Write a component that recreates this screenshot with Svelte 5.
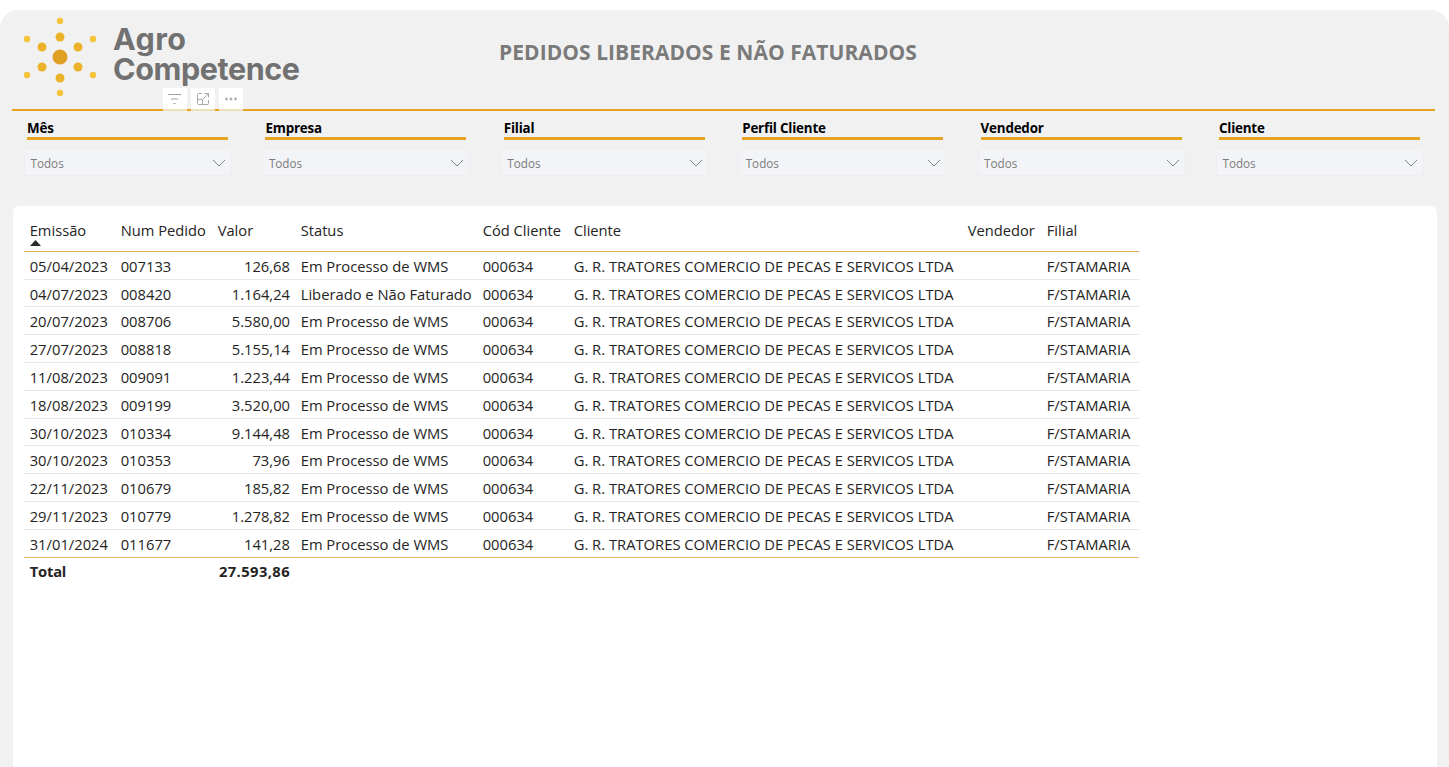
<script>
    const filters = ["Mês", "Empresa", "Filial", "Perfil Cliente", "Vendedor", "Cliente"];
    const columns = ["Emissão", "Num Pedido", "Valor", "Status", "Cód Cliente", "Cliente", "Vendedor", "Filial"];
    const processo = "Em Processo de WMS";
    const rows = [
        ["05/04/2023", "007133", "126,68", processo],
        ["04/07/2023", "008420", "1.164,24", "Liberado e Não Faturado"],
        ["20/07/2023", "008706", "5.580,00", processo],
        ["27/07/2023", "008818", "5.155,14", processo],
        ["11/08/2023", "009091", "1.223,44", processo],
        ["18/08/2023", "009199", "3.520,00", processo],
        ["30/10/2023", "010334", "9.144,48", processo],
        ["30/10/2023", "010353", "73,96", processo],
        ["22/11/2023", "010679", "185,82", processo],
        ["29/11/2023", "010779", "1.278,82", processo],
        ["31/01/2024", "011677", "141,28", processo],
    ];
    // logo dots: x, y, r, colour
    const dots = [
        [48, 47, 7.5, "#e0a024"],
        [48, 27, 4.5, "#ecb32a"], [48, 68, 4.5, "#ecb32a"],
        [30, 37, 4.5, "#ecb32a"], [66, 37, 4.5, "#ecb32a"],
        [30, 57, 4.5, "#ecb32a"], [66, 57, 4.5, "#ecb32a"],
        [48, 11, 3.2, "#f4c53c"], [48, 83, 3.2, "#f4c53c"],
        [15, 29, 3.2, "#f4c53c"], [81, 29, 3.2, "#f4c53c"],
        [15, 65, 3.2, "#f4c53c"], [81, 65, 3.2, "#f4c53c"],
    ];
</script>

<div class="panel">
    <header class="header">
        <svg class="sun" width="102" height="99" viewBox="0 0 102 99">
            {#each dots as d}
                <circle cx={d[0]} cy={d[1]} r={d[2]} fill={d[3]} />
            {/each}
        </svg>
        <div class="logo-text"><span class="agro">Agro</span><br />Competence</div>
        <h1 class="title">PEDIDOS LIBERADOS E NÃO FATURADOS</h1>

        <div class="toolbar">
            <span class="tool">
                <svg width="14" height="14" viewBox="0 0 14 14" fill="none" stroke="#a0a0a0">
                    <path d="M0 2.500h13M3 7h7M5.500 11.500h2" />
                </svg>
            </span>
            <span class="tool">
                <svg width="14" height="14" viewBox="0 0 14 14" fill="none" stroke="#a8a8a8">
                    <path d="M6 1.500H2.500a1 1 0 0 0-1 1v9a1 1 0 0 0 1 1h9a1 1 0 0 0 1-1V8M1.500 7.500h5v5M8.500 1.500h4v4M12.500 1.500 7 7" />
                </svg>
            </span>
            <span class="tool">
                <svg width="14" height="14" viewBox="0 0 14 14" fill="#b0b0b0">
                    <circle cx="2.500" cy="7" r="1.400" />
                    <circle cx="7" cy="7" r="1.400" />
                    <circle cx="11.500" cy="7" r="1.400" />
                </svg>
            </span>
        </div>
    </header>

    <div class="filters">
        {#each filters as f}
            <div class="filter">
                <div class="filter-label">{f}</div>
                <div class="select">
                    <span>Todos</span>
                    <svg width="14" height="8" viewBox="0 0 14 8" fill="none" stroke="#7f8790">
                        <path d="M1 1l6 6 6-6" />
                    </svg>
                </div>
            </div>
        {/each}
    </div>

    <main class="card">
        <div class="table">
            <div class="row head">
                {#each columns as c, i}
                    <div class="cell">
                        {c}
                        {#if i === 0}
                            <svg class="sort" width="11" height="6" viewBox="0 0 11 6"><path d="M5.500 0 11 6H0z" fill="#2b2b2b" /></svg>
                        {/if}
                    </div>
                {/each}
            </div>
            {#each rows as r}
                <div class="row body">
                    <div class="cell">{r[0]}</div>
                    <div class="cell">{r[1]}</div>
                    <div class="cell num">{r[2]}</div>
                    <div class="cell">{r[3]}</div>
                    <div class="cell">000634</div>
                    <div class="cell">G. R. TRATORES COMERCIO DE PECAS E SERVICOS LTDA</div>
                    <div class="cell"></div>
                    <div class="cell">F/STAMARIA</div>
                </div>
            {/each}
            <div class="row total">
                <div class="cell">Total</div>
                <div class="cell"></div>
                <div class="cell num">27.593,86</div>
            </div>
        </div>
    </main>
</div>

<style>
    :global(body) {
        margin: 0;
        background: #fff;
        overflow: hidden;
    }

    .panel {
        margin-top: 10px;
        height: 757px;
        background: #f1f1f1;
        border-radius: 18px 18px 0 0;
        font-family: "Open Sans", "Noto Sans", sans-serif;
        overflow: hidden;
    }

    .header {
        position: relative;
        display: flex;
        align-items: flex-start;
        height: 99px;
        margin: 0 14px 0 12px;
        border-bottom: 2px solid #e5a41f;
    }

    .sun {
        flex: none;
    }

    .logo-text {
        flex: none;
        width: 210px;
        margin: 14px 0 0 -1px;
        font-family: Inter, "Liberation Sans", sans-serif;
        font-size: 30.5px;
        font-weight: 700;
        line-height: 29.5px;
        letter-spacing: -0.4px;
        color: #717171;
    }

    .agro {
        letter-spacing: 0.4px;
    }

    .title {
        margin: 28px 0 0 176px;
        font-family: "Open Sans", sans-serif;
        font-size: 21px;
        font-weight: 700;
        letter-spacing: 0.05px;
        line-height: 28px;
        color: #7a7a7a;
        white-space: nowrap;
    }

    .toolbar {
        position: absolute;
        left: 151px;
        top: 78px;
        display: flex;
        gap: 4px;
    }

    .tool {
        display: flex;
        align-items: center;
        justify-content: center;
        box-sizing: border-box;
        width: 24px;
        height: 23px;
        background: #fff;
        border-bottom: 2px solid #efe0bb;
    }

    .filters {
        display: grid;
        grid-template-columns: repeat(6, 207px);
        column-gap: 31.4px;
        padding: 8px 0 0 24px;
    }

    .filter-label {
        margin: 0 3px;
        height: 18px;
        border-bottom: 3px solid #e5a41f;
        font-size: 13.4px;
        font-weight: 700;
        line-height: 18px;
        letter-spacing: -0.2px;
        color: #000;
    }

    .select {
        display: flex;
        align-items: center;
        justify-content: space-between;
        box-sizing: border-box;
        height: 28px;
        margin-top: 8px;
        padding: 2px 4px 0 5.500px;
        background: #f3f4f8;
        border: 1px solid #eeeeef;
        font-size: 11.7px;
        color: #7b7b7b;
    }

    .card {
        box-sizing: border-box;
        height: 600px;
        margin: 30px 12px 0 13px;
        padding: 9px 0 0 11px;
        background: #fff;
        border-radius: 6px 6px 0 0;
    }

    .table {
        width: 1115px;
        font-size: 14.75px;
        color: #252423;
    }

    .row {
        display: grid;
        grid-template-columns: 91px 97px 83px 182px 91px 394px 79px 98px;
    }

    .cell {
        position: relative;
        padding: 0 0 0 5.700px;
        white-space: nowrap;
    }

    .num {
        padding-right: 5px;
        text-align: right;
    }

    .head {
        height: 36.800px;
        box-sizing: border-box;
        padding-top: 3px;
        border-bottom: 1px solid #e3ac48;
        font-size: 14.700px;
        line-height: 24px;
    }

    .sort {
        position: absolute;
        left: 6px;
        top: 22px;
    }

    .body {
        height: 27.800px;
        box-sizing: border-box;
        border-bottom: 1px solid #e6e6e6;
        line-height: 28px;
    }

    .body:nth-last-child(2) {
        border-bottom-color: #e8b96a;
    }

    .total {
        line-height: 26px;
        font-weight: 700;
    }

    .total .cell:first-child {
        letter-spacing: -0.2px;
    }

    .total .num {
        letter-spacing: 0.4px;
    }
</style>
